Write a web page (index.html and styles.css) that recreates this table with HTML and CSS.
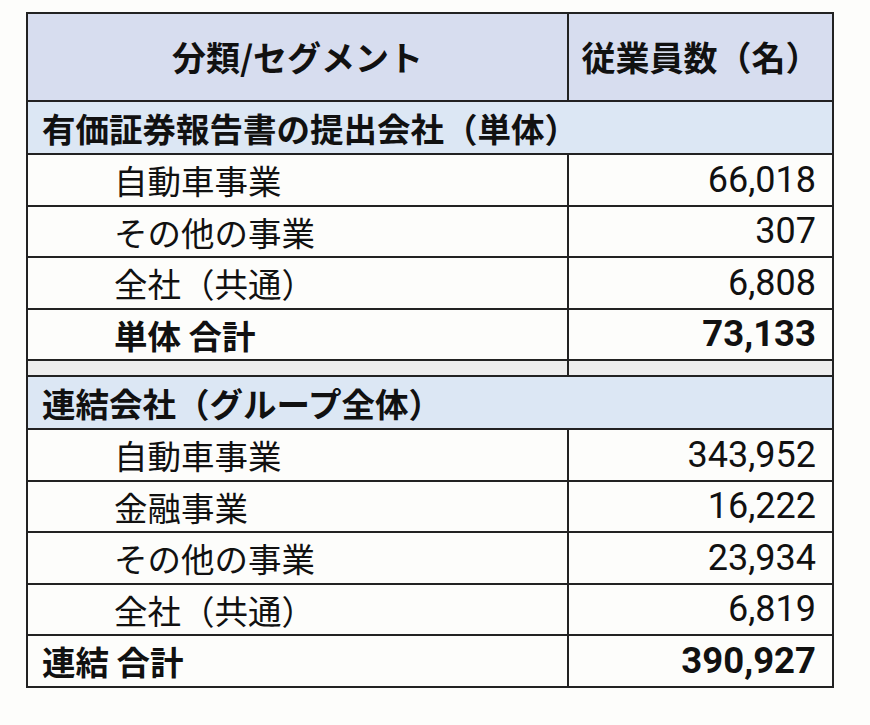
FILE: index.html
```html
<!DOCTYPE html>
<html lang="ja">
<head>
<meta charset="utf-8">
<link rel="stylesheet" href="styles.css">
</head>
<body>
<table class="tbl">
  <colgroup><col class="c1"><col class="c2"></colgroup>
  <thead>
    <tr class="head"><th>分類/セグメント</th><th>従業員数（名）</th></tr>
  </thead>
  <tbody>
    <tr class="sec"><td colspan="2">有価証券報告書の提出会社（単体）</td></tr>
    <tr><td class="lbl">自動車事業</td><td class="num">66,018</td></tr>
    <tr><td class="lbl">その他の事業</td><td class="num">307</td></tr>
    <tr><td class="lbl">全社（共通）</td><td class="num">6,808</td></tr>
    <tr class="tot"><td class="lbl">単体 合計</td><td class="num">73,133</td></tr>
    <tr class="gap"><td></td><td></td></tr>
    <tr class="sec"><td colspan="2">連結会社（グループ全体）</td></tr>
    <tr><td class="lbl">自動車事業</td><td class="num">343,952</td></tr>
    <tr><td class="lbl">金融事業</td><td class="num">16,222</td></tr>
    <tr><td class="lbl">その他の事業</td><td class="num">23,934</td></tr>
    <tr><td class="lbl">全社（共通）</td><td class="num">6,819</td></tr>
    <tr class="tot grand"><td class="lbl">連結 合計</td><td class="num">390,927</td></tr>
  </tbody>
</table>
</body>
</html>
```
FILE: styles.css
```css
html, body {
  margin: 0;
  padding: 0;
  background: #fdfdfb;
}
body {
  padding: 12px 0 0 26px;
  font-family: "Noto Sans CJK JP", "Noto Sans", sans-serif;
  color: #111;
}
.tbl {
  border-collapse: collapse;
  width: 806px;
  table-layout: fixed;
}
.c1 { width: 541px; }
.c2 { width: 265px; }
.tbl th, .tbl td {
  border: 2px solid #222;
  padding: 0;
  font-size: 33px;
  line-height: 1;
}
.head th {
  height: 86px;
  background: #d7ddef;
  font-weight: 700;
  text-align: center;
  font-size: 34px;
}
.sec td {
  height: 51px;
  background: #dce7f4;
  font-weight: 700;
  font-size: 33.5px;
  padding-left: 14px;
}
.tbl td.lbl {
  height: 49.5px;
  padding-left: 86px;
  font-weight: 400;
  font-size: 33.5px;
}
.tbl td.num {
  text-align: right;
  padding-right: 16px;
  font-family: Roboto, "Noto Sans", sans-serif;
  font-size: 36px;
}
.tot td.lbl { font-weight: 700; }
.tot td.num { font-weight: 700; font-size: 36.5px; }
.grand td.lbl { padding-left: 14px; }
.gap td {
  height: 14px;
  background: #ededed;
}
```
